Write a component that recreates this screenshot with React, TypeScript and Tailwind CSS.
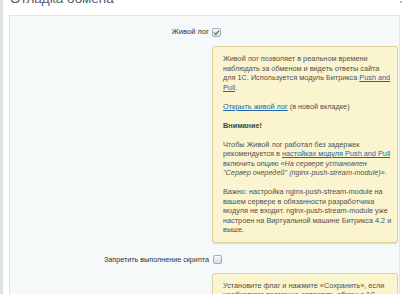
import React from 'react';

function Check({ checked }: { checked?: boolean }) {
  return (
    <span className="inline-flex w-[9px] h-[9px] items-center justify-center rounded-[2px] border border-[#a4acb1] bg-gradient-to-b from-[#f4f6f7] to-[#d9dee1] shadow-[inset_0_1px_0_#fff]">
      {checked && (
        <svg viewBox="0 0 10 10" className="w-[7px] h-[7px]">
          <path d="M1.5 5.2 L4 7.6 L8.6 2.2" fill="none" stroke="#5d6468" strokeWidth="1.6" />
        </svg>
      )}
    </span>
  );
}

const link = 'text-[#2067b0] underline';
const note =
  'mr-[1px] rounded-[3px] border border-[#ddd39c] bg-[#fbf5cf] shadow-[0_1px_1px_rgba(0,0,0,0.12)] pl-[10px] pr-[5px] pt-[7px] pb-[7px] text-[7.3px] leading-[9.5px] text-[#505050]';

export default function App() {
  return (
    <div
      className="w-[403px] h-[294px] overflow-hidden bg-white border-l-[3px] border-[#dce3e6] text-[#555] relative"
      style={{ fontFamily: '"Liberation Sans", Arial, sans-serif' }}
    >
      {/* Title */}
      <div className="h-[15px] overflow-hidden">
        <h1 className="-mt-[8px] pl-[7px] text-[13.5px] leading-[14px] text-[#535c69]">Отладка обмена</h1>
      </div>
      <span className="absolute right-[1px] top-[1px] w-[2px] h-[2px] bg-[#b8bfc3]"></span>

      {/* Panel */}
      <div className="ml-[6px] mr-[3px] h-[300px] border border-[#dfe5e8] bg-[#f5f9f9] pt-[11px]">
        {/* Row: live log */}
        <div className="grid grid-cols-[199px_1fr] gap-x-[3px] items-center text-[7.6px] leading-[10px] text-[#333]">
          <div className="text-right">Живой лог</div>
          <div className="flex"><Check checked /></div>
        </div>
        <div className="grid grid-cols-[199px_1fr] gap-x-[3px] mt-[9px]">
          <div></div>
          <div className={note + ' flex flex-col gap-[9.5px]'}>
            <p>
              Живой лог позволяет в реальном времени наблюдать за обменом и видеть ответы сайта для 1С. Используется модуль Битрикса <a className={link}>Push and Pull</a>.
            </p>
            <p>
              <a className={link}>Открыть живой лог</a> (в новой вкладке)
            </p>
            <p><b className="text-[#444]">Внимание!</b></p>
            <p>
              Чтобы Живой лог работал без задержек рекомендуется в <a className={link}>настойках модуля Push and Pull</a> включить опцию <i>«На сервере установлен "Сервер очередей" (nginx-push-stream-module)»</i>.
            </p>
            <p>
              Важно: настройка nginx-push-stream-module на вашем сервере в обязанности разработчика модуля не входит. nginx-push-stream-module уже настроен на Виртуальной машине Битрикса 4.2 и выше.
            </p>
          </div>
        </div>

        {/* Row: block script */}
        <div className="grid grid-cols-[199px_1fr] gap-x-[3px] items-center mt-[12px] text-[7.2px] leading-[10px] text-[#333]">
          <div className="text-right">Запретить выполнение скрипта</div>
          <div className="flex pl-[1px]"><Check /></div>
        </div>
        <div className="grid grid-cols-[199px_1fr] gap-x-[3px] mt-[8px]">
          <div></div>
          <div className={note}>
            <p>Установите флаг и нажмите «Сохранить», если необходимо временно запретить обмен с 1С.</p>
          </div>
        </div>
      </div>
    </div>
  );
}
